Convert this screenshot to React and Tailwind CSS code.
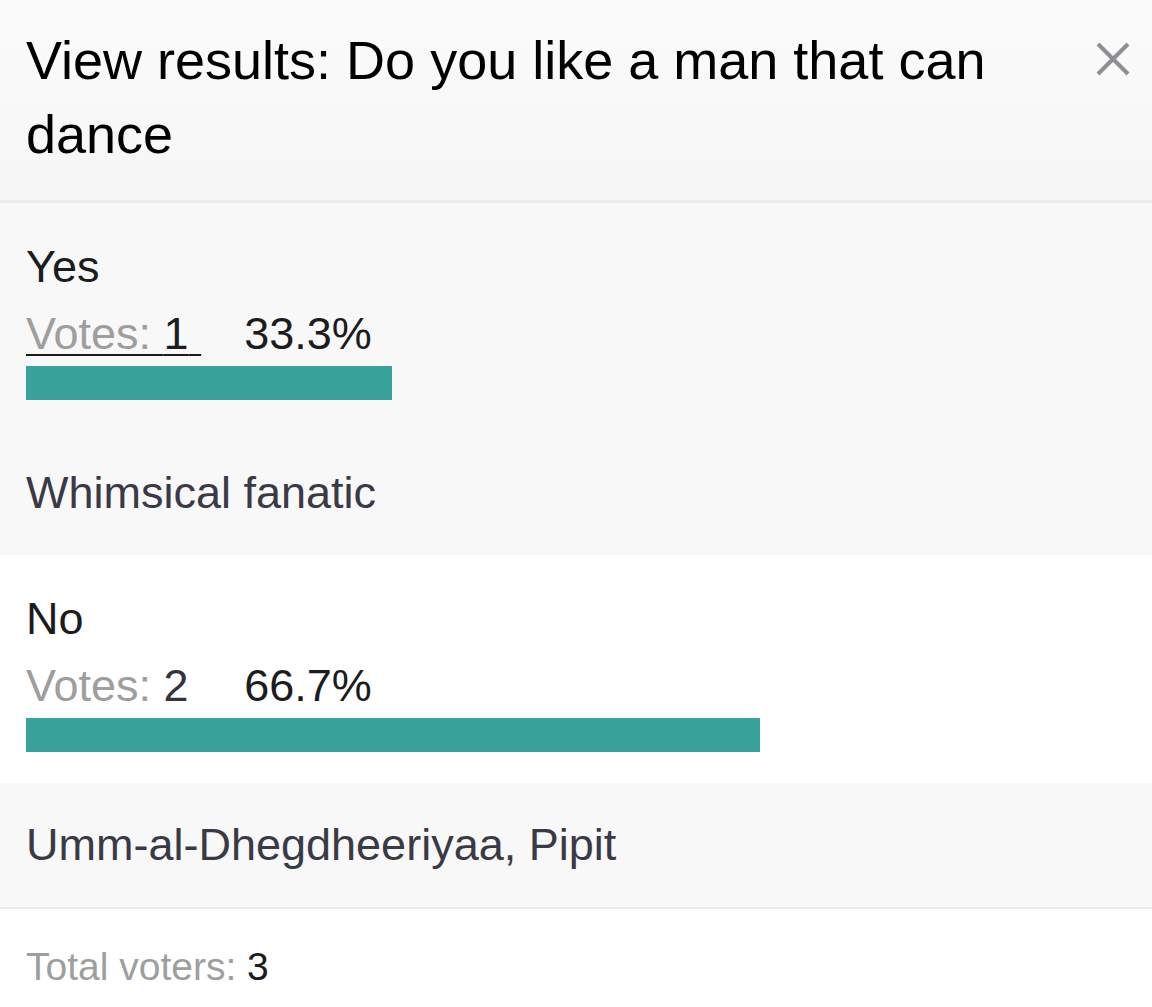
import React from "react";

const options = [
  { label: "Yes", votes: 1, pct: 33.3, voters: "Whimsical fanatic", link: true, bg: "bg-[#f8f8f8]" },
  { label: "No", votes: 2, pct: 66.7, voters: "Umm-al-Dhegdheeriyaa, Pipit", link: false, bg: "bg-white" },
];

const CloseIcon = () => (
  <svg width="34" height="34" viewBox="0 0 34 34" fill="none">
    <path d="M2 2L32 32M32 2L2 32" stroke="#8e8e93" strokeWidth="4" strokeLinecap="butt" />
  </svg>
);

const App = () => {
  return (
    <div className="min-h-[1007px] bg-white font-['Liberation_Sans',Arial,sans-serif]">
      {/* Header */}
      <div className="flex items-start border-b-[3px] border-[#ececec] bg-gradient-to-b from-[#fbfbfb] to-[#f6f6f6] pl-[26px] pr-[22px] pt-[23px] pb-[29px]">
        <h1 className="flex-1 pr-[60px] text-[54px] leading-[74px] text-black">
          View results: Do you like a man that can dance
        </h1>
        <button className="mt-[19px] shrink-0">
          <CloseIcon />
        </button>
      </div>

      {/* Options */}
      {options.map((o) => (
        <div key={o.label}>
          <div className={`${o.bg} px-[26px] pt-[37px] pb-[31px]`}>
            <div className="text-[45px] leading-[54px] text-[#1c1c1e]">{o.label}</div>
            <div className="mt-[13px] flex text-[45px] leading-[54px]">
              {o.link ? (
                <span className="whitespace-pre underline decoration-[#1c1c1e] decoration-2 underline-offset-[5px]">
                  <span className="text-[#9e9e9e]">Votes: </span>
                  <span className="text-[#1c1c1e]">{o.votes} </span>
                </span>
              ) : (
                <span className="whitespace-pre">
                  <span className="text-[#9e9e9e]">Votes: </span>
                  <span className="text-[#33333d]">{o.votes} </span>
                </span>
              )}
              <span className="ml-[43px] text-[#1c1c1e]">{o.pct}%</span>
            </div>
            <div className="mt-[5px] h-[34px] w-full">
              <div className="h-full bg-[#37a39b]" style={{ width: `${o.pct}%` }} />
            </div>
          </div>
          <div className="bg-[#f8f8f8] px-[26px] py-[35px] text-[45px] leading-[54px] text-[#3a3a46]">
            {o.voters}
          </div>
        </div>
      ))}

      {/* Footer */}
      <div className="border-t-2 border-[#ececec] px-[26px] pt-[35px] text-[39px] leading-[46px]">
        <span className="text-[#9e9e9e]">Total voters: </span>
        <span className="text-[#1c1c1e]">3</span>
      </div>
    </div>
  );
};

export default App;
